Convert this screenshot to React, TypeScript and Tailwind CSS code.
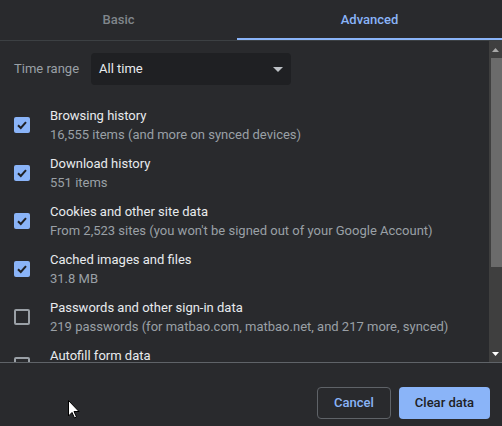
import React from "react";

type Item = { title: string; sub: string; checked: boolean };

const items: Item[] = [
  { title: "Browsing history", sub: "16,555 items (and more on synced devices)", checked: true },
  { title: "Download history", sub: "551 items", checked: true },
  { title: "Cookies and other site data", sub: "From 2,523 sites (you won't be signed out of your Google Account)", checked: true },
  { title: "Cached images and files", sub: "31.8 MB", checked: true },
  { title: "Passwords and other sign-in data", sub: "219 passwords (for matbao.com, matbao.net, and 217 more, synced)", checked: false },
  { title: "Autofill form data", sub: "", checked: false },
];

function Checkbox({ checked }: { checked: boolean }) {
  if (checked) {
    return (
      <div className="flex h-4 w-4 shrink-0 items-center justify-center rounded-[2px] bg-[#8ab4f8]">
        <svg width="12" height="12" viewBox="0 0 12 12">
          <path d="M2 6.2 L4.8 9 L10 3.2" fill="none" stroke="#202124" strokeWidth="2" />
        </svg>
      </div>
    );
  }
  return <div className="h-4 w-4 shrink-0 rounded-[2px] border-2 border-[#9aa0a6]" />;
}

export default function App() {
  return (
    <div
      className="relative h-[426px] w-[502px] overflow-hidden bg-[#292a2d] text-[13px] text-[#e8eaed]"
      style={{ fontFamily: 'Roboto, "Noto Sans", sans-serif' }}
    >
      {/* tabs */}
      <div className="flex h-[41px] border-b border-[#3c4043]">
        <div className="flex w-[237px] items-center justify-center pb-[1px] font-medium text-[#80868b]">Basic</div>
        <div className="flex flex-1 items-center justify-center border-b-2 border-[#8ab4f8] pt-[1px] font-medium text-[#8ab4f8]">
          Advanced
        </div>
      </div>

      {/* scroll area */}
      <div className="flex h-[321px]">
        <div className="flex-1 overflow-hidden">
          <div className="flex items-center pl-[14px] pt-[12px]">
            <span className="w-[77px] text-[#9aa0a6]">Time range</span>
            <div className="flex h-[32px] w-[200px] items-center justify-between rounded bg-[#1f2023] pl-[8px] pr-[8px]">
              <span>All time</span>
              <svg width="10" height="5" viewBox="0 0 10 5">
                <path d="M0 0 H10 L5 5 Z" fill="#bdc1c6" />
              </svg>
            </div>
          </div>
          <div className="pt-[16px]">
            {items.map((it) => (
              <div key={it.title} className="flex h-[48px] items-center gap-[20px] pl-[14px]">
                <Checkbox checked={it.checked} />
                <div className="flex flex-col leading-[19px]">
                  <span className="whitespace-nowrap">{it.title}</span>
                  <span className="h-[19px] whitespace-nowrap text-[#9aa0a6]">{it.sub}</span>
                </div>
              </div>
            ))}
          </div>
        </div>
        {/* scrollbar */}
        <div className="flex w-[13px] flex-col items-center bg-[#3f3f3f]">
          <div className="flex h-[17px] w-full items-center justify-center">
            <svg width="7" height="4" viewBox="0 0 7 4">
              <path d="M0 4 L3.5 0 L7 4 Z" fill="#a8a8a8" />
            </svg>
          </div>
          <div className="ml-[2px] h-[209px] w-[11px] bg-[#6b6b6b]" />
          <div className="flex-1" />
          <div className="flex h-[17px] w-full items-center justify-center">
            <svg width="7" height="4" viewBox="0 0 7 4">
              <path d="M0 0 L7 0 L3.5 4 Z" fill="#ffffff" />
            </svg>
          </div>
        </div>
      </div>

      {/* footer */}
      <div className="flex h-[64px] items-end justify-end gap-[8px] border-t border-[#5f6368] pb-[7px] pr-[12px]">
        <button className="h-[32px] w-[74px] rounded border border-[#5f6368] font-medium text-[#8ab4f8]">Cancel</button>
        <button className="h-[32px] w-[91px] rounded bg-[#8ab4f8] font-medium text-[#202124]">Clear data</button>
      </div>

      {/* mouse pointer */}
      <svg className="absolute left-[68px] top-[400px]" width="12" height="19" viewBox="0 0 12 19">
        <path d="M0.5 0.5 V16 L4 12.5 L6.5 18 L8.5 17 L6 11.5 H11 Z" fill="#ffffff" stroke="#000000" strokeWidth="1" />
      </svg>
    </div>
  );
}
